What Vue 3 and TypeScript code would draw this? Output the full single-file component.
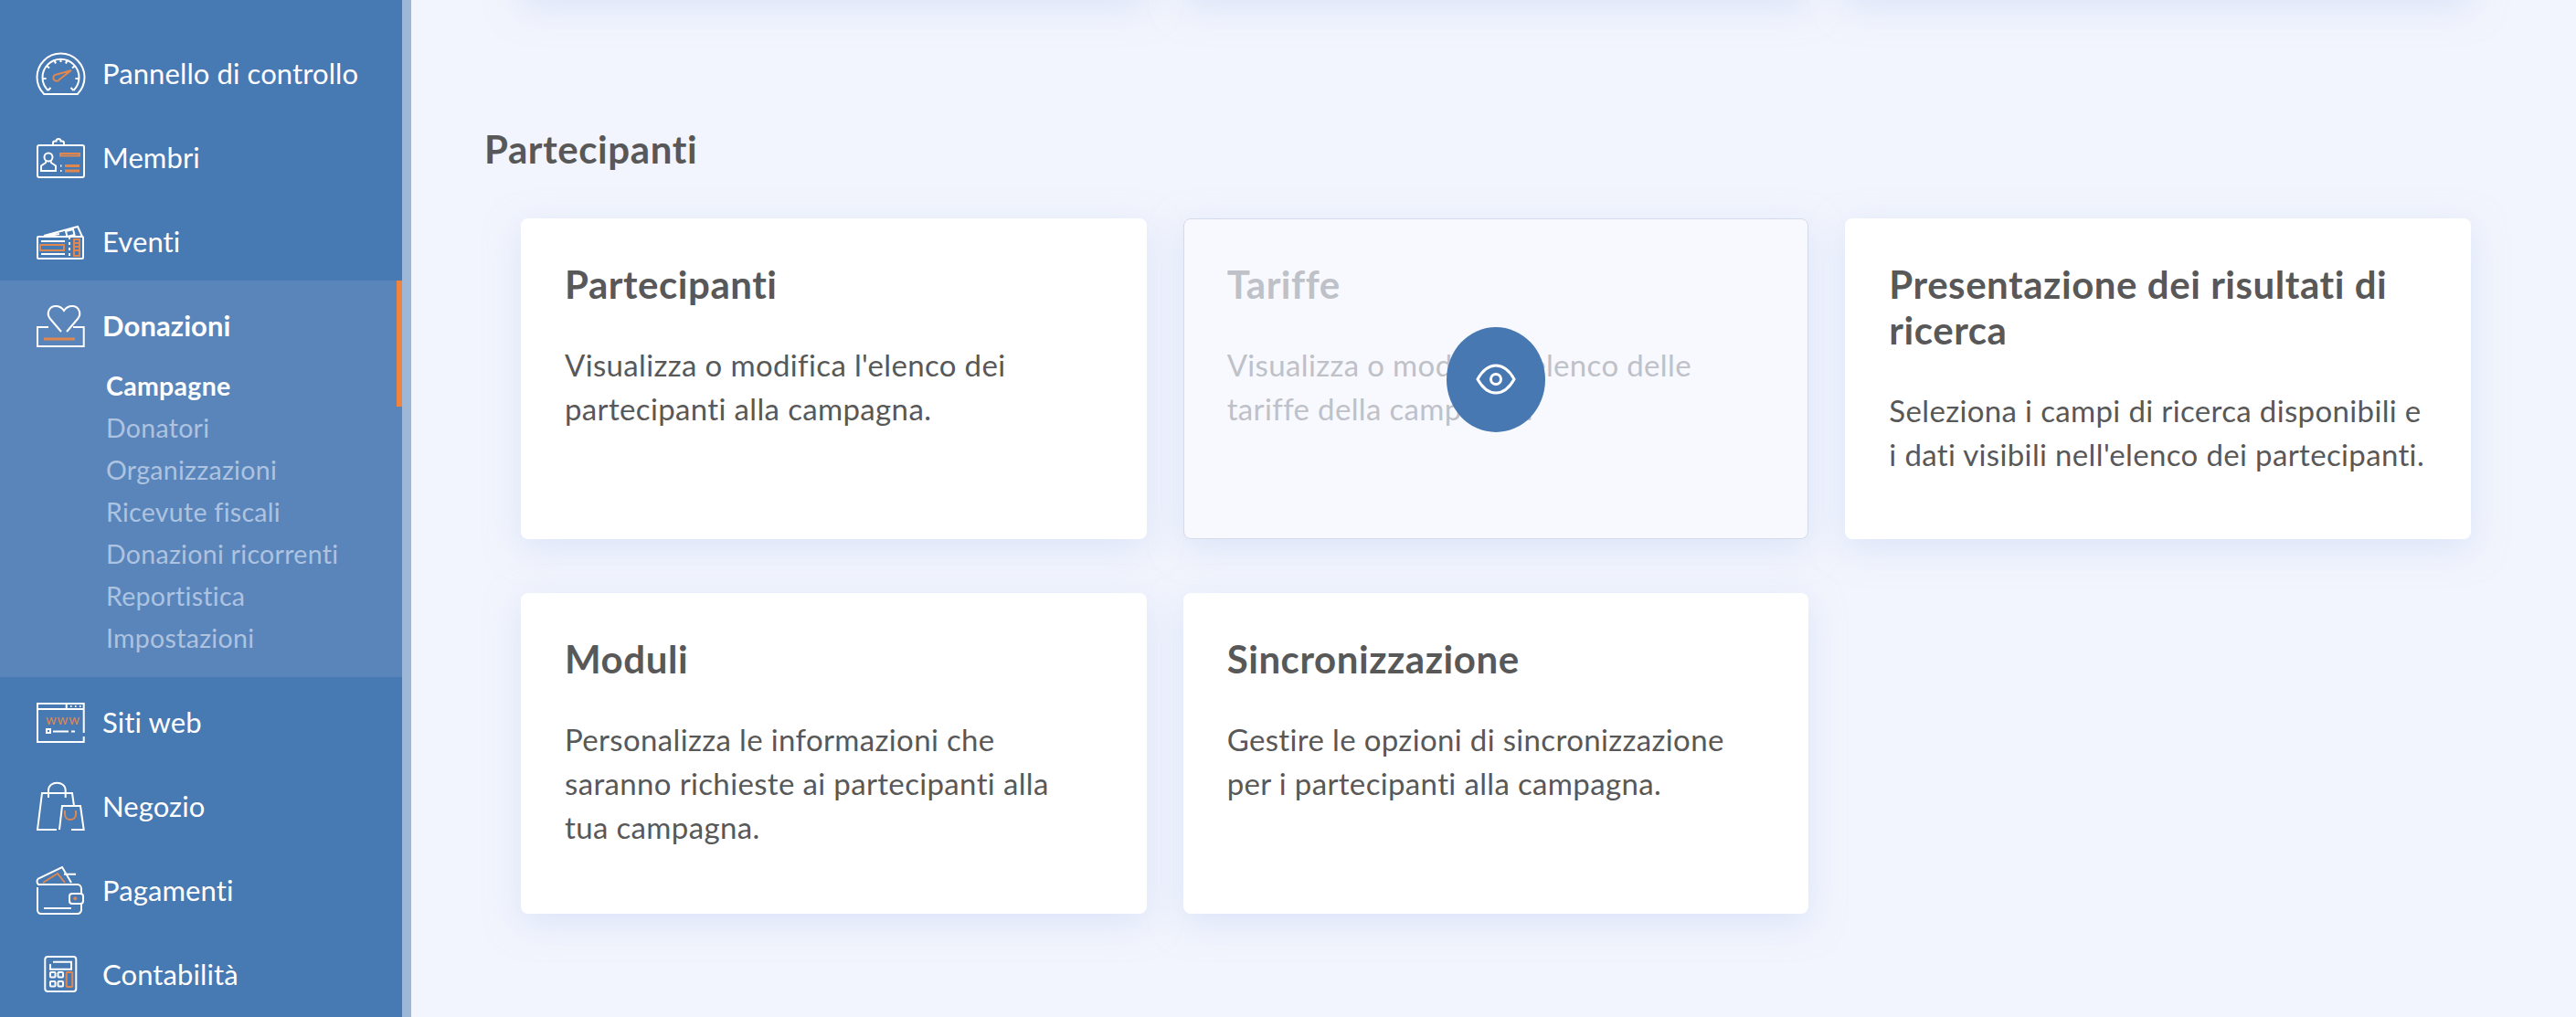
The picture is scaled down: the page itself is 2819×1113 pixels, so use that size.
<script setup lang="ts">
interface Card { title: string; text: string[]; muted?: boolean }
const subItems: string[] = ['Campagne', 'Donatori', 'Organizzazioni', 'Ricevute fiscali', 'Donazioni ricorrenti', 'Reportistica', 'Impostazioni']
const cards: Card[] = [
  { title: 'Partecipanti', text: ["Visualizza o modifica l'elenco dei", 'partecipanti alla campagna.'] },
  { title: 'Tariffe', text: ["Visualizza o modifica l'elenco delle", 'tariffe della campagna.'], muted: true },
  { title: 'Presentazione dei risultati di ricerca', text: ['Seleziona i campi di ricerca disponibili e', "i dati visibili nell'elenco dei partecipanti."] },
  { title: 'Moduli', text: ['Personalizza le informazioni che', 'saranno richieste ai partecipanti alla', 'tua campagna.'] },
  { title: 'Sincronizzazione', text: ['Gestire le opzioni di sincronizzazione', 'per i partecipanti alla campagna.'] },
]
</script>

<template>
  <div class="page">
    <aside class="sidebar">
      <nav class="nav">
        <a class="row">
          <svg class="ico" viewBox="0 0 56 56">
            <path d="M10.200 51A26 26 0 1 1 46.800 51Z" />
            <path d="M14.500 47A20 20 0 1 1 42.500 47" />
            <path d="M14.500 47l3-3M42.500 47l-3-3M8.600 34h4M48.400 34h-4M13 20l3 2.500M44 20l-3 2.500M21.500 14l1.500 3.500M35.500 14l-1.500 3.500M28.500 12v4" />
            <path class="o" d="M24 29.500L40 25 27 35a3.600 3.600 0 1 1-3-5.500Z" />
          </svg>
          <span>Pannello di controllo</span>
        </a>
        <a class="row">
          <svg class="ico" viewBox="0 0 56 56">
            <rect x="3" y="15" width="51" height="35" rx="2" />
            <path d="M20 15v-2.500c0-1.500 1-2 2-2h1.500c0-3.500 5-3.500 5 0H30c1 0 2 .5 2 2V15" />
            <circle cx="15" cy="28" r="4.500" />
            <path d="M12 32.500v1.500L7 37.500V43h16v-5.500L18 34v-1.500" />
            <rect class="o" x="28" y="24" width="21" height="2.500" />
            <path class="o" d="M33 37.500h16M33 43h16" stroke-width="3" />
            <path d="M28 37.500h1.500M28 43h1.500" />
          </svg>
          <span>Membri</span>
        </a>
        <a class="row">
          <svg class="ico" viewBox="0 0 56 56">
            <path d="M10 22l37-10 5 11M15 22l12-2" />
            <path d="M34 17l8-2 1.500 6-8 2z" />
            <rect x="3" y="23" width="50" height="24" rx="1" />
            <path stroke-dasharray="3 3" d="M38 23v24" />
            <rect class="o" x="6" y="32" width="26" height="6" />
            <rect class="o" x="43" y="26" width="6" height="18" />
            <path class="o" d="M43 30h6M43 34h6M43 38h6" />
            <path d="M7 28h26M7 42h26" />
          </svg>
          <span>Eventi</span>
        </a>
        <div class="group">
          <a class="row strong">
            <svg class="ico" viewBox="0 0 56 56">
              <path d="M15 30H3V51H53.700V30H42" />
              <path d="M29 35L17 21C12 15 16 7 23 7C27 7 30 9 32 12C34 9 37 7 41 7C48 7 52 15 47 21L35 35" />
              <path class="o" stroke-width="3" d="M10 43H44" />
            </svg>
            <span>Donazioni</span>
          </a>
          <ul class="sub">
            <li v-for="(item, i) in subItems" :key="item" :class="{ current: i === 0 }">{{ item }}</li>
          </ul>
          <i class="marker"></i>
        </div>
        <a class="row">
          <svg class="ico" viewBox="0 0 56 56">
            <path d="M53.700 40V8H3V50H53.700V44" />
            <path d="M3 14H53.700M34.700 8V14" />
            <path stroke-dasharray="1.500 3.500" d="M39 11H51" />
            <text class="www" x="12" y="31">www</text>
            <rect x="13" y="36" width="4" height="4" />
            <path d="M20 38.500H37M40 38.500H44" />
          </svg>
          <span>Siti web</span>
        </a>
        <a class="row">
          <svg class="ico" viewBox="0 0 56 56">
            <path d="M24 54H3L8 14H41L43 28" />
            <path d="M15 19V11C15 0 33.700 0 33.700 11V19" />
            <path d="M27 54L30 28H50L53.700 54H40" />
            <path class="o" d="M33 33V37C33 45 45 45 45 37V33" />
          </svg>
          <span>Negozio</span>
        </a>
        <a class="row">
          <svg class="ico" viewBox="0 0 56 56">
            <path d="M3 25V50C3 52 4.500 54 7 54H47C49 54 51 52 51 50V43M51 32V27C51 24 49 22 47 22H4C2 20 2 17 4 15.500L30 3L40 20M32 10.700H45" />
            <rect x="38" y="32" width="15" height="11" rx="3" />
            <circle class="of" cx="44.300" cy="37.300" r="2" />
            <path d="M10 48H40" />
            <path class="o" d="M9 20L25 10L33 20" />
          </svg>
          <span>Pagamenti</span>
        </a>
        <a class="row">
          <svg class="ico" viewBox="0 0 56 56">
            <rect x="11.300" y="9" width="34" height="38" rx="3" />
            <path d="M20 14.700H40V22.700H17V17" />
            <rect x="17" y="26" width="5.500" height="5.500" rx="1" />
            <rect x="25.500" y="26" width="5.500" height="5.500" rx="1" />
            <rect x="17" y="36" width="5.500" height="5.500" rx="1" />
            <rect x="25.500" y="36" width="5.500" height="5.500" rx="1" />
            <rect class="o" x="34.700" y="26" width="6.500" height="16" rx="1" />
          </svg>
          <span>Contabilità</span>
        </a>
      </nav>
    </aside>
    <div class="strip"></div>
    <main class="main">
      <div class="ghosts"><div class="ghost"></div><div class="ghost"></div><div class="ghost"></div></div>
      <h1 class="heading">Partecipanti</h1>
      <section class="cards">
        <article v-for="c in cards" :key="c.title" class="card" :class="{ muted: c.muted }">
          <h2>{{ c.title }}</h2>
          <p v-for="line in c.text" :key="line">{{ line }}</p>
          <button v-if="c.muted" class="eye" type="button" aria-label="Visualizza">
            <svg width="44" height="34" viewBox="0 0 44 34">
              <path d="M2 17C7 8 14 2 22 2S37 8 42 17C37 26 30 32 22 32S7 26 2 17Z" />
              <circle cx="22" cy="17" r="5.500" />
            </svg>
          </button>
        </article>
      </section>
    </main>
  </div>
</template>

<style scoped>
.page {
  display: flex;
  width: 2819px;
  height: 1113px;
  overflow: hidden;
  background: #f2f5fd;
  font-family: "Lato", "Open Sans", sans-serif;
  font-variant-ligatures: none;
}
.sidebar { width: 440px; flex: none; background: #4779b3; }
.strip { width: 10px; flex: none; background: #9db7d9; }
.nav { padding-top: 34px; }
.row {
  display: flex;
  align-items: center;
  gap: 18px;
  height: 92px;
  padding-left: 38px;
  color: #fff;
  font-size: 31px;
  letter-spacing: 0.1px;
}
.row.strong { font-weight: 700; }
.ico { width: 56px; height: 56px; flex: none; fill: none; stroke: #fff; stroke-width: 2; overflow: visible; }
.ico .o { stroke: #e0874f; }
.ico .of { fill: #e0874f; stroke: none; }
.ico .www { fill: #e0874f; stroke: none; font-size: 15px; font-family: "Lato", sans-serif; letter-spacing: 0.8px; }
.group {
  position: relative;
  margin: -3px 0 3px;
  padding: 3px 0 19px;
  background: #5a85bb;
}
.marker {
  position: absolute;
  top: 0;
  right: 0;
  width: 6px;
  height: 138px;
  background: #f0843f;
}
.sub { list-style: none; margin: -2px 0 0; padding: 0 0 0 116px; }
.sub li { height: 46px; line-height: 45px; font-size: 28.500px; color: #adc3e0; letter-spacing: 0.3px; }
.sub li.current { color: #fff; font-weight: 700; }
.main { flex: 1; padding: 0 115px 0 80px; min-width: 0; }
.ghosts {
  display: grid;
  grid-template-columns: repeat(3, 1fr);
  gap: 40px;
  margin: -60px 0 0 40px;
  height: 58px;
}
.ghost { box-shadow: 0 10px 36px rgba(200, 212, 248, 0.5); background: #fff; border-radius: 8px; }
.heading {
  margin: 140px 0 51px;
  font-size: 42px;
  line-height: 50px;
  font-weight: 700;
  letter-spacing: 0.6px;
  color: #585858;
}
.cards {
  display: grid;
  grid-template-columns: repeat(3, 1fr);
  grid-auto-rows: 351px;
  gap: 59px 40px;
  margin-left: 40px;
}
.card {
  position: relative;
  box-sizing: border-box;
  padding: 47px 48px 0;
  background: #fff;
  border-radius: 8px;
  box-shadow: 0 10px 36px rgba(200, 212, 248, 0.5);
  color: #585858;
}
.card h2 { margin: 0 0 39px; font-size: 42px; line-height: 50px; font-weight: 700; letter-spacing: 0.55px; }
.card p { margin: 0; font-size: 33px; line-height: 48px; letter-spacing: 0.35px; white-space: nowrap; }
.card.muted {
  background: #f7f9fe;
  border: 1px solid #d6dbeb;
  padding: 46px 47px 0;
  color: #bfc1c8;
}
.eye {
  position: absolute;
  top: 50%;
  left: 50%;
  width: 108px;
  height: 115px;
  margin: -57px 0 0 -54px;
  padding: 0;
  display: flex;
  align-items: center;
  justify-content: center;
  border: 0;
  border-radius: 50%;
  background: #4878b2;
}
.eye svg { fill: none; stroke: #fff; stroke-width: 3; }
</style>
